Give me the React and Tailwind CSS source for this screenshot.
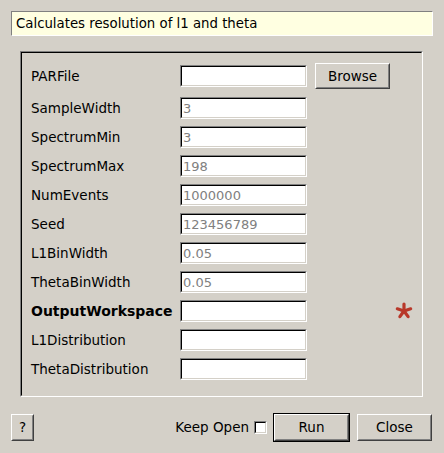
import React from "react";

const font = { fontFamily: '"DejaVu Sans", sans-serif' };

function Field({ value }) {
  return (
    <div className="w-[127px] h-[22px] border border-t-[#808080] border-l-[#808080] border-b-white border-r-white">
      <div className="w-full h-full border border-t-black border-l-black border-b-[#d4d0c8] border-r-[#d4d0c8] bg-white flex items-center pl-[1px] text-[13px] text-[#808080] leading-none">
        {value}
      </div>
    </div>
  );
}

function Btn({ children, className = "", def = false }) {
  const inner = (
    <div className="w-full h-full border border-t-white border-l-white border-b-[#404040] border-r-[#404040] flex items-center justify-center text-[13.5px] text-black">
      <div className="w-full h-full flex items-center justify-center border border-t-[#d4d0c8] border-l-[#d4d0c8] border-b-[#808080] border-r-[#808080]">
        {children}
      </div>
    </div>
  );
  return (
    <div className={`${className} ${def ? "border border-black" : ""}`}>{inner}</div>
  );
}

function Asterisk() {
  const arms = [0, 72, 144, 216, 288];
  return (
    <svg width="18" height="18" viewBox="-9 -9 18 18">
      {arms.map((a) => {
        const r = (a * Math.PI) / 180;
        return (
          <line
            key={a}
            x1="0"
            y1="0"
            x2={7 * Math.sin(r)}
            y2={-7 * Math.cos(r)}
            stroke="#b8382a"
            strokeWidth="3.2"
            strokeLinecap="round"
          />
        );
      })}
    </svg>
  );
}

const rows = [
  ["SampleWidth", "3"],
  ["SpectrumMin", "3"],
  ["SpectrumMax", "198"],
  ["NumEvents", "1000000"],
  ["Seed", "123456789"],
  ["L1BinWidth", "0.05"],
  ["ThetaBinWidth", "0.05"],
  ["OutputWorkspace", "", true],
  ["L1Distribution", ""],
  ["ThetaDistribution", ""],
];

export default function App() {
  return (
    <div className="w-[444px] h-[453px] bg-[#d4d0c8] flex flex-col pt-[11px] pl-[11px] overflow-hidden" style={font}>
      <div className="w-[422px] h-[25px] bg-[#ffffe1] border border-t-[#808080] border-l-[#808080] border-b-white border-r-white flex items-center pl-[4px] text-[13.3px] text-black">
        Calculates resolution of l1 and theta
      </div>

      <div className="ml-[9px] mt-[15px] w-[403px] h-[346px] border border-t-[#808080] border-l-[#808080] border-b-white border-r-white">
        <div className="w-full h-full border border-t-black border-l-black border-b-[#d4d0c8] border-r-[#d4d0c8] pt-[10px] pl-[9px] flex flex-col">
          <div className="flex items-center h-[26px]">
            <div className="w-[149px] text-[13.5px] text-black">PARFile</div>
            <Field value="" />
            <Btn className="ml-[8px] w-[75px] h-[26px]">Browse</Btn>
          </div>
          <div className="flex flex-col gap-[7px] mt-[8px]">
            {rows.map(([label, val, bold]) => (
              <div key={label} className="flex items-center h-[22px]">
                <div className={`w-[149px] text-black whitespace-nowrap ${bold ? "font-bold text-[14px]" : "text-[13.5px]"}`}>{label}</div>
                <Field value={val} />
                {bold && (
                  <div className="ml-[88px] flex items-center">
                    <Asterisk />
                  </div>
                )}
              </div>
            ))}
          </div>
        </div>
      </div>

      <div className="flex items-center mt-[16px] h-[28px] w-[421px]">
        <Btn className="w-[23px] h-[27px] mt-[1px]">?</Btn>
        <div className="flex-1" />
        <span className="text-[13.5px] text-black mr-[5px]">Keep Open</span>
        <div className="w-[13px] h-[13px] border border-t-[#808080] border-l-[#808080] border-b-white border-r-white mr-[6px]">
          <div className="w-full h-full bg-white border border-t-black border-l-black border-b-[#d4d0c8] border-r-[#d4d0c8]" />
        </div>
        <Btn def className="w-[77px] h-[29px]">Run</Btn>
        <Btn className="ml-[7px] w-[75px] h-[27px] mt-[1px]">Close</Btn>
      </div>
    </div>
  );
}
